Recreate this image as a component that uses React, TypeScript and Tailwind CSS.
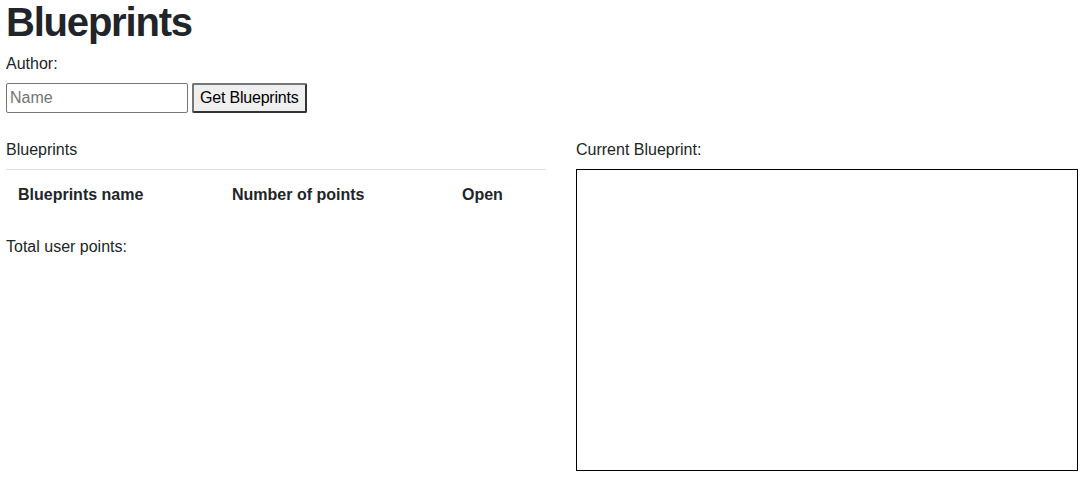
export default function App() {
  return (
    <div className="min-h-[478px] bg-white px-[6px] text-[16px] leading-6 text-[#212529] font-['Segoe_UI','Liberation_Sans',sans-serif]">
      <h1 className="text-[40px] leading-[44px] font-semibold tracking-[-1.2px] mb-2">Blueprints</h1>
      <div className="mb-[7px]">Author:</div>
      <div className="flex items-center gap-1">
        <input
          placeholder="Name"
          className="w-[182px] h-[30px] border border-[#767676] rounded-[2px] px-[3px] text-[16px] placeholder:text-[#757575] outline-none"
        />
        <button className="h-[30px] px-[6px] bg-[#efefef] border-2 border-t-[#767676] border-l-[#767676] border-r-[#333] border-b-[#333] rounded-[2px] text-[16px] leading-6 text-black tracking-[-0.2px]">
          Get Blueprints
        </button>
      </div>

      <div className="flex mt-[25px]">
        <div className="w-[540px]">
          <div className="mb-[7px]">Blueprints</div>
          <table className="w-full border-t border-[#dee2e6] mb-4">
            <thead>
              <tr className="font-bold">
                <th className="w-[214px] text-left px-3 pt-[13px] pb-3">Blueprints name</th>
                <th className="w-[230px] text-left px-3 pt-[13px] pb-3">Number of points</th>
                <th className="text-left px-3 pt-[13px] pb-3">Open</th>
              </tr>
            </thead>
            <tbody></tbody>
          </table>
          <div>Total user points:</div>
        </div>
        <div className="ml-[30px]">
          <div className="mb-[7px]">Current Blueprint:</div>
          <div className="w-[502px] h-[302px] border border-black"></div>
        </div>
      </div>
    </div>
  );
}
